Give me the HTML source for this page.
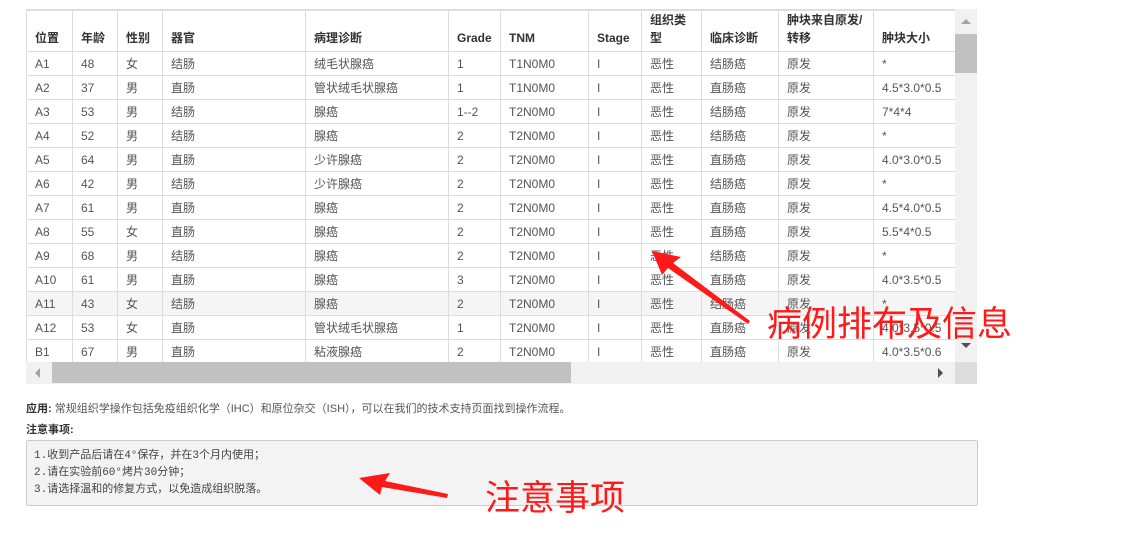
<!DOCTYPE html>
<html><head><meta charset="utf-8">
<style>
body{margin:0;width:1126px;height:550px;background:#fff;font-family:"Liberation Sans","Noto Sans CJK SC",sans-serif;position:relative;overflow:hidden;color:#333}
.wrap{position:absolute;left:26px;top:9px;width:929px;height:353px;overflow:hidden;border-top:1px solid #ddd}
table{border-collapse:collapse;table-layout:fixed;width:1000px;font-size:12px}
td,th{border:1px solid #ddd;padding:0 0 0 8px;height:23px;text-align:left;white-space:nowrap;overflow:hidden;color:#555;font-weight:normal}
th{height:35px;vertical-align:bottom;padding:0 6px 4px 8px;font-weight:bold;color:#333;white-space:normal;line-height:18px}
tr.g td{background:#f5f5f5}
.vs{position:absolute;left:955px;top:9px;width:22px;height:353px;background:#f1f1f1}
.hs{position:absolute;left:26px;top:362px;width:929px;height:22px;background:#f1f1f1}
.corner{position:absolute;left:955px;top:362px;width:22px;height:22px;background:#dcdcdc}
.tri{position:absolute;width:0;height:0}
p{margin:0}
</style></head><body>
<div class="wrap"><table>
<colgroup><col style="width:46px"><col style="width:45px"><col style="width:45px"><col style="width:143px"><col style="width:143px"><col style="width:52px"><col style="width:88px"><col style="width:53px"><col style="width:60px"><col style="width:77px"><col style="width:95px"><col style="width:153px"></colgroup>
<tr><th>位置</th><th>年龄</th><th>性别</th><th>器官</th><th>病理诊断</th><th>Grade</th><th>TNM</th><th>Stage</th><th>组织类型</th><th>临床诊断</th><th>肿块来自原发/转移</th><th>肿块大小</th></tr>
<tr><td>A1</td><td>48</td><td>女</td><td>结肠</td><td>绒毛状腺癌</td><td>1</td><td>T1N0M0</td><td>I</td><td>恶性</td><td>结肠癌</td><td>原发</td><td>*</td></tr>
<tr><td>A2</td><td>37</td><td>男</td><td>直肠</td><td>管状绒毛状腺癌</td><td>1</td><td>T1N0M0</td><td>I</td><td>恶性</td><td>直肠癌</td><td>原发</td><td>4.5*3.0*0.5</td></tr>
<tr><td>A3</td><td>53</td><td>男</td><td>结肠</td><td>腺癌</td><td>1--2</td><td>T2N0M0</td><td>I</td><td>恶性</td><td>结肠癌</td><td>原发</td><td>7*4*4</td></tr>
<tr><td>A4</td><td>52</td><td>男</td><td>结肠</td><td>腺癌</td><td>2</td><td>T2N0M0</td><td>I</td><td>恶性</td><td>结肠癌</td><td>原发</td><td>*</td></tr>
<tr><td>A5</td><td>64</td><td>男</td><td>直肠</td><td>少许腺癌</td><td>2</td><td>T2N0M0</td><td>I</td><td>恶性</td><td>直肠癌</td><td>原发</td><td>4.0*3.0*0.5</td></tr>
<tr><td>A6</td><td>42</td><td>男</td><td>结肠</td><td>少许腺癌</td><td>2</td><td>T2N0M0</td><td>I</td><td>恶性</td><td>结肠癌</td><td>原发</td><td>*</td></tr>
<tr><td>A7</td><td>61</td><td>男</td><td>直肠</td><td>腺癌</td><td>2</td><td>T2N0M0</td><td>I</td><td>恶性</td><td>直肠癌</td><td>原发</td><td>4.5*4.0*0.5</td></tr>
<tr><td>A8</td><td>55</td><td>女</td><td>直肠</td><td>腺癌</td><td>2</td><td>T2N0M0</td><td>I</td><td>恶性</td><td>直肠癌</td><td>原发</td><td>5.5*4*0.5</td></tr>
<tr><td>A9</td><td>68</td><td>男</td><td>结肠</td><td>腺癌</td><td>2</td><td>T2N0M0</td><td>I</td><td>恶性</td><td>结肠癌</td><td>原发</td><td>*</td></tr>
<tr><td>A10</td><td>61</td><td>男</td><td>直肠</td><td>腺癌</td><td>3</td><td>T2N0M0</td><td>I</td><td>恶性</td><td>直肠癌</td><td>原发</td><td>4.0*3.5*0.5</td></tr>
<tr class="g"><td>A11</td><td>43</td><td>女</td><td>结肠</td><td>腺癌</td><td>2</td><td>T2N0M0</td><td>I</td><td>恶性</td><td>结肠癌</td><td>原发</td><td>*</td></tr>
<tr><td>A12</td><td>53</td><td>女</td><td>直肠</td><td>管状绒毛状腺癌</td><td>1</td><td>T2N0M0</td><td>I</td><td>恶性</td><td>直肠癌</td><td>原发</td><td>4.0*3.5*0.5</td></tr>
<tr><td>B1</td><td>67</td><td>男</td><td>直肠</td><td>粘液腺癌</td><td>2</td><td>T2N0M0</td><td>I</td><td>恶性</td><td>直肠癌</td><td>原发</td><td>4.0*3.5*0.6</td></tr>
</table></div>
<div class="vs"><div style="position:absolute;left:0;top:25px;width:22px;height:39px;background:#c1c1c1"></div>
<div class="tri" style="left:6px;top:10px;border-left:5px solid transparent;border-right:5px solid transparent;border-bottom:5px solid #a3a3a3"></div>
<div class="tri" style="left:6px;top:334px;border-left:5px solid transparent;border-right:5px solid transparent;border-top:5px solid #505050"></div></div>
<div class="hs"><div style="position:absolute;left:26px;top:0;width:519px;height:21px;background:#c1c1c1"></div>
<div class="tri" style="left:9px;top:6px;border-top:5px solid transparent;border-bottom:5px solid transparent;border-right:5px solid #a3a3a3"></div>
<div class="tri" style="left:912px;top:6px;border-top:5px solid transparent;border-bottom:5px solid transparent;border-left:5px solid #505050"></div></div>
<div class="corner"></div>
<p style="position:absolute;left:26px;top:400px;font-size:11px;color:#555"><b style="color:#333">应用:</b> 常规组织学操作包括免疫组织化学（IHC）和原位杂交（ISH），可以在我们的技术支持页面找到操作流程。</p>
<p style="position:absolute;left:26px;top:421px;font-size:11px;font-weight:bold;color:#333">注意事项:</p>
<div style="position:absolute;left:26px;top:440px;width:952px;height:66px;background:#f3f3f3;border:1px solid #ccc;border-radius:2px;font-family:'Liberation Mono','Noto Sans CJK SC',monospace;font-size:11px;color:#444;line-height:17px;padding-top:7px;box-sizing:border-box;padding-left:7px">1.收到产品后请在4°保存，并在3个月内使用；<br>2.请在实验前60°烤片30分钟；<br>3.请选择温和的修复方式，以免造成组织脱落。</div>
<svg style="position:absolute;left:0;top:0" width="1126" height="550">
<polygon points="652,251 681,257 673,263 750,321 748,324 668,268 662,275" fill="#ff1a1a"/>
<polygon points="359,478 390,473 385,481 448,494 447,498 382,487 380,495" fill="#ff1a1a"/>
</svg>
<div style="position:absolute;left:767px;top:300px;font-size:35px;color:#ff1a1a;font-family:'Noto Sans CJK SC',sans-serif;line-height:44px">病例排布及信息</div>
<div style="position:absolute;left:485px;top:474px;font-size:35px;color:#ff1a1a;font-family:'Noto Sans CJK SC',sans-serif;line-height:44px">注意事项</div>
</body></html>
